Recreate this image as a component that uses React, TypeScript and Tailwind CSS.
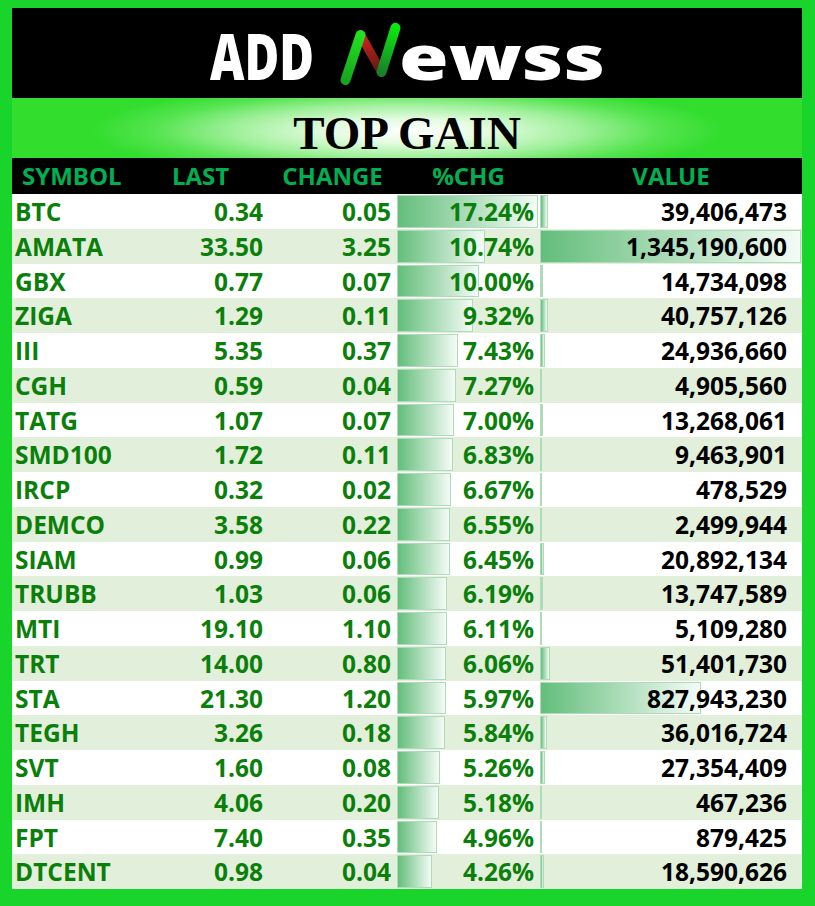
import React from "react";

type Row = { s: string; last: string; chg: string; pct: number; val: number };

const rows: Row[] = [
  { s: "BTC", last: "0.34", chg: "0.05", pct: 17.24, val: 39406473 },
  { s: "AMATA", last: "33.50", chg: "3.25", pct: 10.74, val: 1345190600 },
  { s: "GBX", last: "0.77", chg: "0.07", pct: 10.0, val: 14734098 },
  { s: "ZIGA", last: "1.29", chg: "0.11", pct: 9.32, val: 40757126 },
  { s: "III", last: "5.35", chg: "0.37", pct: 7.43, val: 24936660 },
  { s: "CGH", last: "0.59", chg: "0.04", pct: 7.27, val: 4905560 },
  { s: "TATG", last: "1.07", chg: "0.07", pct: 7.0, val: 13268061 },
  { s: "SMD100", last: "1.72", chg: "0.11", pct: 6.83, val: 9463901 },
  { s: "IRCP", last: "0.32", chg: "0.02", pct: 6.67, val: 478529 },
  { s: "DEMCO", last: "3.58", chg: "0.22", pct: 6.55, val: 2499944 },
  { s: "SIAM", last: "0.99", chg: "0.06", pct: 6.45, val: 20892134 },
  { s: "TRUBB", last: "1.03", chg: "0.06", pct: 6.19, val: 13747589 },
  { s: "MTI", last: "19.10", chg: "1.10", pct: 6.11, val: 5109280 },
  { s: "TRT", last: "14.00", chg: "0.80", pct: 6.06, val: 51401730 },
  { s: "STA", last: "21.30", chg: "1.20", pct: 5.97, val: 827943230 },
  { s: "TEGH", last: "3.26", chg: "0.18", pct: 5.84, val: 36016724 },
  { s: "SVT", last: "1.60", chg: "0.08", pct: 5.26, val: 27354409 },
  { s: "IMH", last: "4.06", chg: "0.20", pct: 5.18, val: 467236 },
  { s: "FPT", last: "7.40", chg: "0.35", pct: 4.96, val: 879425 },
  { s: "DTCENT", last: "0.98", chg: "0.04", pct: 4.26, val: 18590626 },
];

const MAXV = 1345190600;

function Logo() {
  return (
    <svg width="400" height="72" viewBox="0 0 400 72">
      <defs>
        <linearGradient id="lg1" gradientUnits="userSpaceOnUse" x1="153.5" y1="18" x2="138.5" y2="63">
          <stop offset="0" stopColor="#22e022" />
          <stop offset="1" stopColor="#17a51c" />
        </linearGradient>
        <linearGradient id="lg2" gradientUnits="userSpaceOnUse" x1="188.5" y1="10.8" x2="174.5" y2="55">
          <stop offset="0" stopColor="#0ce80c" />
          <stop offset="1" stopColor="#17822a" />
        </linearGradient>
        <linearGradient id="rg" gradientUnits="userSpaceOnUse" x1="153.5" y1="18" x2="174.5" y2="55">
          <stop offset="0" stopColor="#d42222" />
          <stop offset="1" stopColor="#5a1a12" />
        </linearGradient>
      </defs>
      <text
        x="3"
        y="63"
        textLength="104"
        lengthAdjust="spacingAndGlyphs"
        fill="#ffffff"
        fontFamily="'Open Sans', 'DejaVu Sans', sans-serif"
        fontWeight="800"
        fontSize="64"
      >
        ADD
      </text>
      <line x1="153.5" y1="18" x2="174.5" y2="55" stroke="url(#rg)" strokeWidth="9" strokeLinecap="round" />
      <line x1="138.5" y1="63" x2="153.5" y2="18" stroke="url(#lg1)" strokeWidth="10" strokeLinecap="round" />
      <line x1="174.5" y1="55" x2="188.5" y2="10.8" stroke="url(#lg2)" strokeWidth="10" strokeLinecap="round" />
      <text
        x="192"
        y="63"
        textLength="206"
        lengthAdjust="spacingAndGlyphs"
        fill="#ffffff"
        fontFamily="'Open Sans', 'DejaVu Sans', sans-serif"
        fontWeight="800"
        fontSize="62"
      >
        ewss
      </text>
    </svg>
  );
}

export default function App() {
  return (
    <div className="w-[815px] h-[906px] bg-[#19d52b] pt-[8px] pl-[12px] pr-[13px] pb-[17px] flex flex-col font-['Open_Sans',sans-serif]">
      <div className="h-[90px] shrink-0 bg-black flex items-center justify-center">
        <Logo />
      </div>
      <div className="h-[60px] shrink-0 flex justify-center items-start pt-[12px] bg-[radial-gradient(ellipse_40%_80%_at_50%_55%,#ffffff_0%,#e4fbe1_25%,#9ff09a_55%,#55e450_80%,#32dd2d_100%)]">
        <span className="font-['Liberation_Serif',serif] font-bold text-[47px] leading-none text-black">
          TOP GAIN
        </span>
      </div>
      <div className="h-[36px] shrink-0 bg-black grid grid-cols-[138px_118px_129px_143px_262px] items-center text-[24px] font-bold text-[#00b050] leading-none">
        <div className="pl-[10px]">SYMBOL</div>
        <div className="pl-[22px]">LAST</div>
        <div className="text-center">CHANGE</div>
        <div className="text-center">%CHG</div>
        <div className="text-center">VALUE</div>
      </div>
      <div className="flex-1 min-h-0 flex flex-col">
        {rows.map((r, i) => (
          <div
            key={r.s}
            className={
              "flex-1 min-h-0 grid grid-cols-[138px_118px_129px_143px_262px] items-stretch text-[24.5px] leading-none font-bold " +
              (i % 2 === 1 ? "bg-[#e2efda]" : "bg-white")
            }
          >
            <div className="flex items-center pl-[3px] pt-[2px] text-[#0a7f0a]">{r.s}</div>
            <div className="flex items-center justify-end pr-[5px] pt-[2px] text-[#0a7f0a]">{r.last}</div>
            <div className="flex items-center justify-end pr-[6px] pt-[2px] text-[#0a7f0a]">{r.chg}</div>
            <div className="relative flex items-center justify-end pr-[6px] pt-[2px] text-[#0a7f0a]">
              <div
                className="absolute left-0 top-[1px] bottom-[1px] border border-[#aedcbb] bg-[linear-gradient(to_right,#63be7b,#f4fbf6)]"
                style={{ width: `${(r.pct * 8.15).toFixed(1)}px` }}
              />
              <span className="relative">{r.pct.toFixed(2)}%</span>
            </div>
            <div className="relative flex items-center justify-end pr-[15px] pt-[2px] text-black">
              <div
                className="absolute left-0 top-[1px] bottom-[1px] border border-[#aedcbb] bg-[linear-gradient(to_right,#63be7b,#f4fbf6)]"
                style={{ width: `${Math.max(2, (r.val / MAXV) * 261).toFixed(1)}px` }}
              />
              <span className="relative">{r.val.toLocaleString("en-US")}</span>
            </div>
          </div>
        ))}
      </div>
    </div>
  );
}
